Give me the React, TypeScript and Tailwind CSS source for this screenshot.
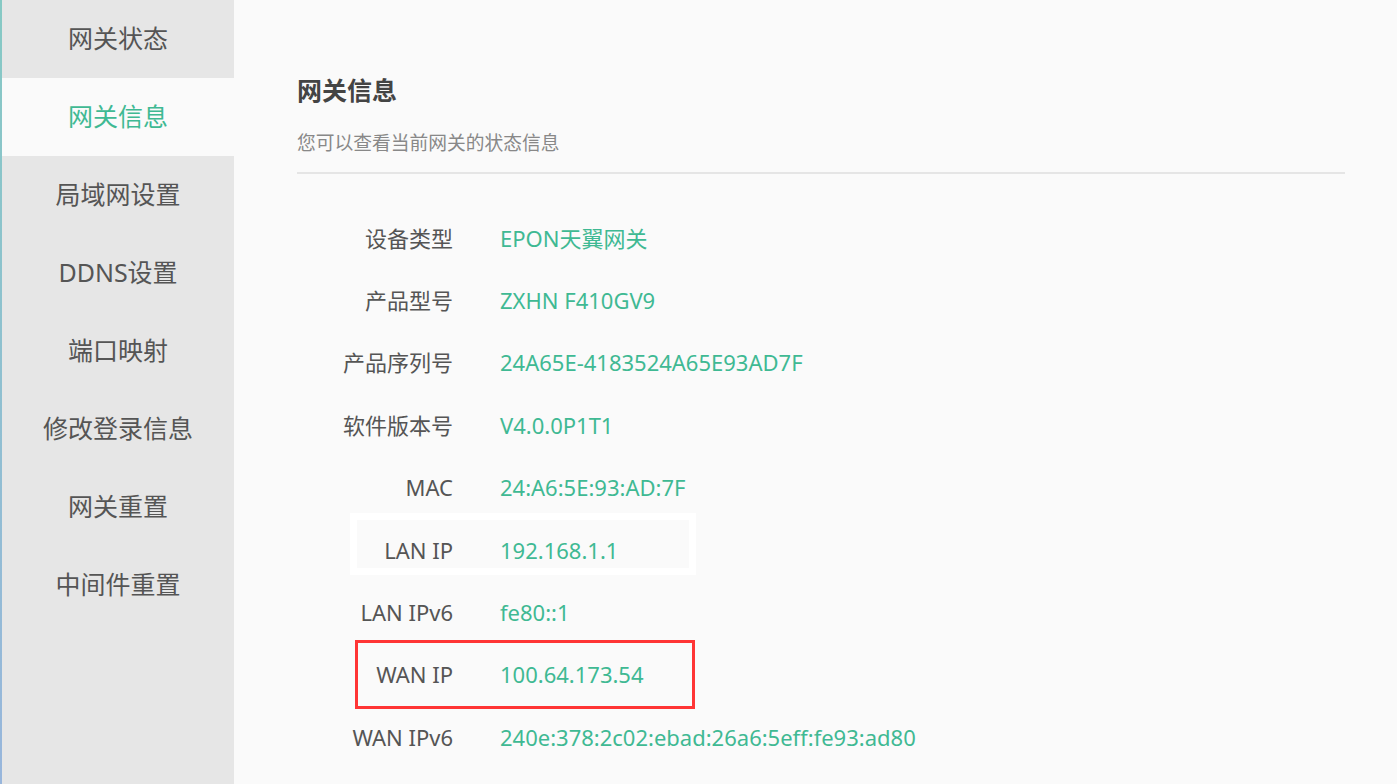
import React from 'react'

const MENU = ['网关状态', '网关信息', '局域网设置', 'DDNS设置', '端口映射', '修改登录信息', '网关重置', '中间件重置']

const ROWS: { label: string; value: string; mark?: 'focus' | 'red' }[] = [
  { label: '设备类型', value: 'EPON天翼网关' },
  { label: '产品型号', value: 'ZXHN F410GV9' },
  { label: '产品序列号', value: '24A65E-4183524A65E93AD7F' },
  { label: '软件版本号', value: 'V4.0.0P1T1' },
  { label: 'MAC', value: '24:A6:5E:93:AD:7F' },
  { label: 'LAN IP', value: '192.168.1.1', mark: 'focus' },
  { label: 'LAN IPv6', value: 'fe80::1' },
  { label: 'WAN IP', value: '100.64.173.54', mark: 'red' },
  { label: 'WAN IPv6', value: '240e:378:2c02:ebad:26a6:5eff:fe93:ad80' },
]

export default function App() {
  const active = 1
  return (
    <div
      className="flex h-[784px] w-[1397px] overflow-hidden bg-[#fafafa] text-[#555]"
      style={{ fontFamily: '"Noto Sans", "Noto Sans CJK SC", sans-serif' }}
    >
      <div className="w-[2px] shrink-0 bg-gradient-to-b from-[#86c9c4] to-[#98b6dc]" />
      <nav className="flex w-[232px] shrink-0 flex-col bg-[#e6e6e6]">
        {MENU.map((m, i) => (
          <div
            key={m}
            className={
              'flex h-[78px] items-center justify-center text-[25px] ' +
              (i === active ? 'bg-[#fafafa] text-[#3fb993]' : 'text-[#555]')
            }
          >
            {m}
          </div>
        ))}
      </nav>

      <main className="flex-1 pl-[63px] pr-[52px] pt-[74px]">
        <h1 className="text-[25px] font-bold leading-[32px] text-[#444]">网关信息</h1>
        <p className="mt-[25px] text-[18.75px] leading-[24px] text-[#888]">您可以查看当前网关的状态信息</p>
        <div className="mt-[17px] h-[2px] bg-[#e5e5e5]" />

        <div className="mt-[33px] flex flex-col">
          {ROWS.map(r => (
            <div key={r.label} className="relative flex h-[62.4px] items-center text-[22px]">
              {r.mark === 'focus' && (
                <div className="absolute left-[53px] top-[-6px] h-[62px] w-[346px] border-[7px] border-white" />
              )}
              {r.mark === 'red' && (
                <div className="absolute left-[58px] top-[-4px] h-[69px] w-[340px] border-[3px] border-[#ff3535]" />
              )}
              <span className="relative w-[156px] text-right text-[#555]">{r.label}</span>
              <span className="relative ml-[47px] text-[#3fb993]">{r.value}</span>
            </div>
          ))}
        </div>
      </main>
    </div>
  )
}
